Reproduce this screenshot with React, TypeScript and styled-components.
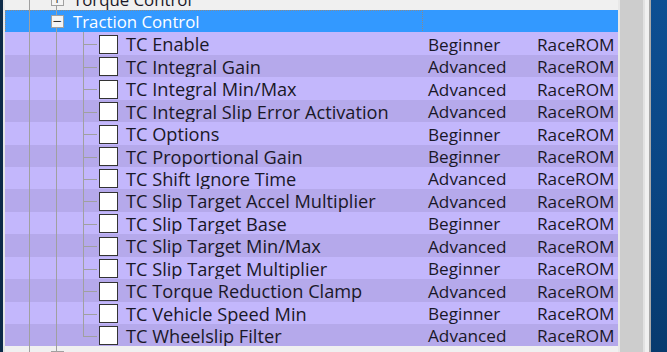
import styled, { createGlobalStyle, css } from 'styled-components';

const GlobalStyle = createGlobalStyle`
  html, body {
    margin: 0;
    padding: 0;
    width: 667px;
    height: 352px;
    overflow: hidden;
    background: #0c2a48;
  }
  body {
    font-family: 'Open Sans', 'Noto Sans', sans-serif;
  }
`;

type Level = 'Beginner' | 'Advanced';

const TRACTION_ITEMS: { name: string; level: Level }[] = [
  { name: 'TC Enable', level: 'Beginner' },
  { name: 'TC Integral Gain', level: 'Advanced' },
  { name: 'TC Integral Min/Max', level: 'Advanced' },
  { name: 'TC Integral Slip Error Activation', level: 'Advanced' },
  { name: 'TC Options', level: 'Beginner' },
  { name: 'TC Proportional Gain', level: 'Beginner' },
  { name: 'TC Shift Ignore Time', level: 'Advanced' },
  { name: 'TC Slip Target Accel Multiplier', level: 'Advanced' },
  { name: 'TC Slip Target Base', level: 'Beginner' },
  { name: 'TC Slip Target Min/Max', level: 'Advanced' },
  { name: 'TC Slip Target Multiplier', level: 'Beginner' },
  { name: 'TC Torque Reduction Clamp', level: 'Advanced' },
  { name: 'TC Vehicle Speed Min', level: 'Beginner' },
  { name: 'TC Wheelslip Filter', level: 'Advanced' },
];

type GuideKind = 'none' | 'full' | 'top' | 'bottom' | 'tee' | 'elbow';
type RowTone = 'plain' | 'selected' | 'light' | 'dark';

export default function App() {
  return (
    <>
      <GlobalStyle />
      <Screen>
        <WindowEdge />
        <TreePanel>
          <TreeList>
            <Row tone='plain'>
              <TreeCell>
                <Guide kind='full' />
                <Guide kind='full'>
                  <Expander>+</Expander>
                </Guide>
                <GroupLabel>Torque Control</GroupLabel>
              </TreeCell>
            </Row>
            <Row tone='selected'>
              <TreeCell $focused>
                <Guide kind='full' />
                <Guide kind='full'>
                  <Expander>−</Expander>
                </Guide>
                <GroupLabel $selected>Traction Control</GroupLabel>
              </TreeCell>
            </Row>
            {TRACTION_ITEMS.map((item, i) => (
              <Row key={item.name} tone={i % 2 === 0 ? 'light' : 'dark'}>
                <TreeCell>
                  <Guide kind='full' />
                  <Guide kind='full' />
                  <Guide kind={i === TRACTION_ITEMS.length - 1 ? 'elbow' : 'tee'} />
                  <CheckBox />
                  <ItemLabel>{item.name}</ItemLabel>
                </TreeCell>
                <Cell>{item.level}</Cell>
                <Cell>RaceROM</Cell>
              </Row>
            ))}
            <Row tone='plain'>
              <TreeCell>
                <Guide kind='full' />
                <Guide kind='top'>
                  <Expander>+</Expander>
                </Guide>
                <GroupLabel>Transmission</GroupLabel>
              </TreeCell>
            </Row>
          </TreeList>
        </TreePanel>
        <ScrollGap />
        <ScrollTrack />
        <FrameBorder />
        <Desktop />
      </Screen>
    </>
  );
}

// ROOT
const Screen = styled.div`
  display: flex;
  width: 667px;
  height: 352px;
  overflow: hidden;
`;

const WindowEdge = styled.div`
  width: 3px;
  background: #0c2a48;
  border-right: 2px solid #e6e6e6;
  flex-shrink: 0;
`;

// TREE
const TreePanel = styled.div`
  width: 613px;
  background: #f0f0f0;
  overflow: hidden;
  flex-shrink: 0;
`;

const TreeList = styled.div`
  display: flex;
  flex-direction: column;
  margin-top: -12.4px;
`;

const toneColors: Record<RowTone, string> = {
  plain: '#f0f0f0',
  selected: '#3399ff',
  light: '#c3b7fc',
  dark: '#b5a9eb',
};

const Row = styled.div<{ tone: RowTone }>`
  display: grid;
  grid-template-columns: 418px 109px 1fr;
  height: 22.43px;
  background: ${(p) => toneColors[p.tone]};
  color: #1a1828;
  font-size: 17.2px;
  flex-shrink: 0;
`;

const TreeCell = styled.div<{ $focused?: boolean }>`
  display: flex;
  align-items: center;
  padding-left: 11px;
  height: 100%;
  box-sizing: border-box;
  ${(p) =>
    p.$focused &&
    css`
      outline: 1px dotted #8a8a8a;
      outline-offset: -1px;
    `}
`;

const Guide = styled.div<{ kind: GuideKind }>`
  position: relative;
  width: 27px;
  height: 100%;
  flex-shrink: 0;
  display: flex;
  align-items: center;
  justify-content: center;

  &::before {
    content: '';
    position: absolute;
    left: 13px;
    width: 1px;
    background: #a0a0a0;
    top: ${(p) => (p.kind === 'bottom' ? '50%' : '0')};
    bottom: ${(p) => (p.kind === 'top' || p.kind === 'elbow' ? '50%' : '0')};
    display: ${(p) => (p.kind === 'none' ? 'none' : 'block')};
  }

  &::after {
    content: '';
    position: absolute;
    left: 13px;
    right: 0;
    top: 50%;
    height: 1px;
    background: #a0a0a0;
    display: ${(p) => (p.kind === 'tee' || p.kind === 'elbow' ? 'block' : 'none')};
  }
`;

const Expander = styled.span`
  position: relative;
  z-index: 1;
  width: 11px;
  height: 11px;
  border: 1px solid #a0a0a0;
  background: #f4f4f4;
  font-family: 'DejaVu Sans', sans-serif;
  font-size: 12px;
  line-height: 10px;
  text-align: center;
  color: #333;
  margin-left: 1px;
`;

const GroupLabel = styled.span<{ $selected?: boolean }>`
  margin-left: 3px;
  font-size: 16.8px;
  color: ${(p) => (p.$selected ? '#ffffff' : '#1a1828')};
  white-space: nowrap;
`;

const CheckBox = styled.span`
  width: 17px;
  height: 17px;
  border: 1px solid #333333;
  background: #ffffff;
  margin-left: 2px;
  flex-shrink: 0;
`;

const ItemLabel = styled.span`
  margin-left: 8px;
  font-size: 18.2px;
  white-space: nowrap;
`;

const Cell = styled.div`
  display: flex;
  align-items: center;
  padding-left: 5px;
  white-space: nowrap;
`;

// SIDE
const ScrollGap = styled.div`
  width: 2px;
  background: #e8e8e8;
  flex-shrink: 0;
`;

const ScrollTrack = styled.div`
  width: 23px;
  background: #cdcdcd;
  flex-shrink: 0;
`;

const FrameBorder = styled.div`
  width: 4px;
  background: #f0f0f0;
  border-left: 2px solid #e2e2e2;
  border-right: 2px solid #a8a8a8;
  flex-shrink: 0;
  box-sizing: content-box;
`;

const Desktop = styled.div`
  flex: 1;
  background: linear-gradient(180deg, #0d4f93 0%, #0a4684 50%, #073a6e 100%);
`;
